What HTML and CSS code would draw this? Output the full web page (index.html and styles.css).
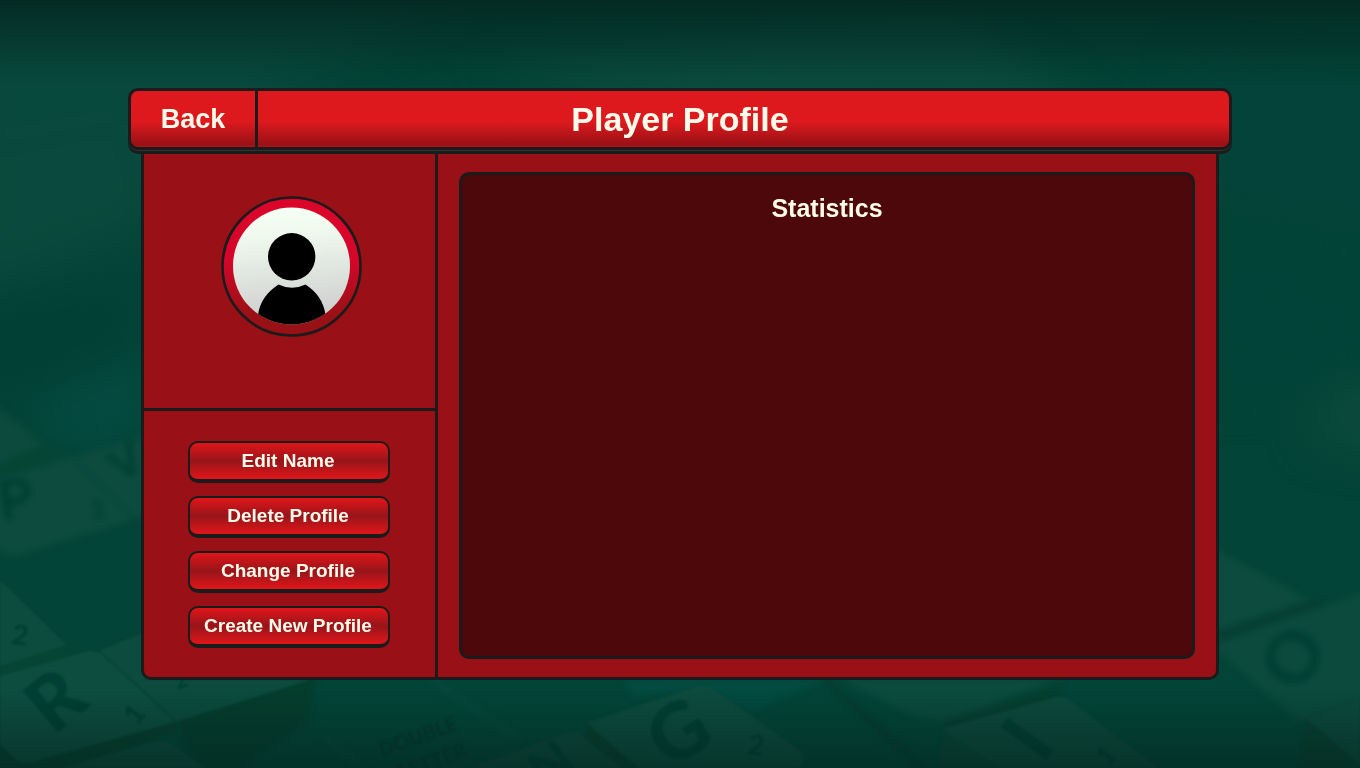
FILE: index.html
```html
<!DOCTYPE html>
<html lang="en">
<head>
<meta charset="utf-8">
<meta name="viewport" content="width=device-width, initial-scale=1">
<title>Player Profile</title>
<link rel="stylesheet" href="styles.css">
</head>
<body>
<svg class="board" viewBox="0 0 1360 768" preserveAspectRatio="xMidYMid slice" aria-hidden="true">
  <defs>
    <linearGradient id="shade" x1="0" y1="0" x2="0" y2="1">
      <stop offset="0" stop-color="#04241d" stop-opacity=".8"/>
      <stop offset=".04" stop-color="#04241d" stop-opacity=".5"/>
      <stop offset=".11" stop-color="#04241d" stop-opacity="0"/>
      <stop offset=".9" stop-color="#04241d" stop-opacity="0"/>
      <stop offset="1" stop-color="#04241d" stop-opacity=".55"/>
    </linearGradient>
    <filter id="far" x="-30%" y="-30%" width="160%" height="160%" color-interpolation-filters="sRGB"><feGaussianBlur stdDeviation="20"/></filter>
    <filter id="mid" x="-10%" y="-10%" width="120%" height="120%" color-interpolation-filters="sRGB"><feGaussianBlur stdDeviation="3"/></filter>
    <filter id="near" x="-10%" y="-10%" width="120%" height="120%" color-interpolation-filters="sRGB"><feGaussianBlur stdDeviation="1"/></filter>
  </defs>
  <rect width="1360" height="768" fill="#034438"/>
  <g filter="url(#far)">
    <path d="M-40 -40H520L260 110 130 240-40 300z" fill="#08493e"/>
    <path d="M480 60 950 10 1110 120 700 130z" fill="#0b4b3e"/>
    <path d="M1180 60 1420 90V220L1230 190z" fill="#04433a"/>
    <path d="M-30 150 120 120 150 220-20 290z" fill="#0a493d"/>
    <path d="M-20 300 130 290V380L-20 400z" fill="#014035"/>
    <path d="M30 400 150 350V440L60 450z" fill="#044a40"/>
    <path d="M1220 220 1390 330V380L1210 400z" fill="#014338"/>
    <path d="M1320 390 1400 370V460L1310 440z" fill="#0b493c"/>
  </g>
  <g filter="url(#mid)">
    <path d="M-10 400 45 445-10 468z" fill="#0b4a3c"/>
    <path d="M-10 468 45 445 70 452-10 480z" fill="#054533"/>
    <path d="M-10 480 150 435V515L15 556-10 548z" fill="#0c4b3e"/>
    <path d="M75 460 135 520" stroke="#05453a" stroke-width="3"/>
    <path d="M1200 540 1310 600 1200 636z" fill="#0c4b3e"/>
    <path d="M1200 636 1310 600 1330 604 1200 648z" fill="#053f32"/>
    <path d="M1210 645 1370 590V700L1300 722z" fill="#0b4a3d"/>
    <path d="M1300 722 1370 697V706L1306 732z" fill="#054131"/>
    <path d="M840 678H1060L945 722 910 715z" fill="#0b4b3d"/>
    <path d="M945 720 1060 685 1065 697 945 738z" fill="#053f30"/>
    <path d="M620 678H830L750 712 700 690 635 697z" fill="#034a40"/>
    <path d="M825 680 930 775" stroke="#063b2f" stroke-width="6"/>
    <path d="M175 722 315 675 310 720 240 768H200z" fill="#053d2d"/>
    <path d="M430 678 520 740M322 735 370 775" stroke="#074a3f" stroke-width="4"/>
    <g class="letter">
      <text x="-2" y="519" font-size="56" transform="rotate(-8 14 500)">P</text>
      <text x="91" y="518" font-size="24" transform="rotate(-10 98 510)">2</text>
      <text x="112" y="476" font-size="44" transform="rotate(-30 130 465)">V</text>
      <text x="1265" y="685" font-size="72" transform="rotate(-62 1292 659)">O</text>
    </g>
  </g>
  <g filter="url(#near)">
    <path d="M0 580 66 644Q68 650 60 653L0 674z" fill="#0c4c3e"/>
    <path d="M0 666 66 645V656L0 678z" fill="#064534"/>
    <path d="M0 676 88 651Q98 650 106 657L175 722 28 763Q20 764 14 758L0 744z" fill="#0d4d3f"/>
    <path d="M100 650 145 632V680H310L175 722 102 654z" fill="#0c4b3e"/>
    <path d="M102 654 175 720" stroke="#07443a" stroke-width="2" fill="none"/>
    <path d="M0 744 16 761 30 764 175 722V732L45 775H0z" fill="#073e2e"/>
    <path d="M60 768 155 742Q164 739 172 744L205 768z" fill="#0d493d"/>
    <path d="M588 722 698 686Q706 684 714 689L802 752Q808 760 798 768H640L590 735z" fill="#0d4b3e"/>
    <path d="M588 724 640 770H612L586 738z" fill="#083e2e"/>
    <path d="M470 768 566 733Q575 730 583 737L622 768z" fill="#0d473b"/>
    <path d="M944 728 1056 697Q1064 695 1071 701L1158 768H938z" fill="#0d493c"/>
    <path d="M944 730 1000 768H938z" fill="#0a4437"/>
    <path d="M1308 718 1360 698V768H1298z" fill="#0c493c"/>
    <path d="M1308 720 1360 764V768H1298z" fill="#083f31"/>
    <g class="letter">
      <text x="32" y="727" font-size="76" transform="rotate(-40 56 702)">R</text>
      <text x="126" y="724" font-size="28" transform="rotate(-52 134 714)">1</text>
      <text x="12" y="645" font-size="28" transform="rotate(10 20 636)">2</text>
      <text x="650" y="760" font-size="78" transform="rotate(-32 678 732)">G</text>
      <text x="748" y="755" font-size="28" transform="rotate(10 756 746)">2</text>
      <text x="532" y="784" font-size="52" transform="rotate(-36 550 766)">N</text>
      <text x="1017" y="766" font-size="78" transform="rotate(-54 1029 740)">I</text>
      <text x="1099" y="764" font-size="26" transform="rotate(-50 1107 756)">1</text>
      <text x="174" y="688" font-size="22" transform="rotate(-20 181 680)">2</text>
    </g>
    <g class="square-label">
      <text x="382" y="757" transform="rotate(-20 382 757)">DOUBLE</text>
      <text x="402" y="780" transform="rotate(-20 402 780)">LETTER</text>
    </g>
  </g>
  <rect width="1360" height="768" fill="url(#shade)"/>
</svg>

<main class="screen">
  <header class="titlebar">
    <button class="back" type="button">Back</button>
    <h1 class="title">Player Profile</h1>
  </header>
  <div class="panel">
    <aside class="sidebar">
      <section class="portrait" aria-label="Player picture">
        <svg class="avatar" viewBox="0 0 141 141" role="img" aria-label="Player avatar">
          <defs>
            <linearGradient id="ring" x1="0" y1="0" x2="0" y2="1">
              <stop offset="0" stop-color="#dc052b"/>
              <stop offset=".45" stop-color="#d4062a"/>
              <stop offset=".85" stop-color="#991116"/>
              <stop offset="1" stop-color="#991116"/>
            </linearGradient>
            <linearGradient id="disc" x1=".45" y1="0" x2=".55" y2="1">
              <stop offset="0" stop-color="#f5fff4"/>
              <stop offset=".25" stop-color="#eef8ed"/>
              <stop offset=".9" stop-color="#d0d0d0"/>
            </linearGradient>
            <clipPath id="disc-clip"><circle cx="70.500" cy="70" r="58.500"/></clipPath>
          </defs>
          <circle cx="70.500" cy="70.500" r="69" fill="url(#ring)" stroke="#1b1b1b" stroke-width="2.600"/>
          <circle cx="70.500" cy="70" r="58.500" fill="url(#disc)"/>
          <g clip-path="url(#disc-clip)">
            <circle cx="70.700" cy="60.800" r="23.700"/>
            <path d="M57.500 88.500Q71 95 84.500 88.500C95 95 103 106 104.500 119V141H37V119C38.500 106 47 95 57.500 88.500z"/>
          </g>
        </svg>
      </section>
      <nav class="actions" aria-label="Profile actions">
        <button class="action" type="button">Edit Name</button>
        <button class="action" type="button">Delete Profile</button>
        <button class="action" type="button">Change Profile</button>
        <button class="action" type="button">Create New Profile</button>
      </nav>
    </aside>
    <div class="content">
      <section class="stats" aria-labelledby="stats-title">
        <h2 class="stats-title" id="stats-title">Statistics</h2>
      </section>
    </div>
  </div>
</main>
</body>
</html>
```
FILE: styles.css
```css
:root {
  --ink: #1b1b1b;
  --cream: #fffbea;
  --red: #991116;
  --bright: #dd191e;
  --wine: #4c080b;
}

* {
  box-sizing: border-box;
}

body {
  margin: 0;
  background: #034438;
  color: var(--cream);
  font-family: "Arial Rounded MT Bold", "Liberation Sans", Arial, sans-serif;
  font-weight: 700;
}

button {
  color: inherit;
  font: inherit;
  cursor: pointer;
}

.board {
  position: fixed;
  inset: 0;
  z-index: -1;
  width: 100%;
  height: 100%;
}

.letter {
  fill: #013f34;
  font-family: Lato, sans-serif;
  font-weight: 900;
}

.square-label {
  fill: #03382d;
  font-family: Lato, sans-serif;
  font-size: 20px;
  font-weight: 700;
}

.screen {
  display: flex;
  flex-direction: column;
  min-height: 100vh;
  padding: 88px 128px;
}

.titlebar {
  display: grid;
  grid-template-columns: 127px 1fr 127px;
  z-index: 1;
  min-height: 62px;
  border: 3px solid var(--ink);
  border-radius: 10px;
  background: linear-gradient(var(--bright) 55%, var(--red) 96%, #b0151a);
  box-shadow: 0 1px #333, 0 4px var(--ink);
}

.back {
  padding: 0;
  border: 0;
  border-right: 3px solid var(--ink);
  background: none;
  font-size: 27px;
}

.title {
  align-self: center;
  margin: 0;
  font-size: 34px;
  line-height: 40px;
  text-align: center;
}

.panel {
  display: flex;
  flex: 1;
  margin: 0 13px;
  border: 3px solid var(--ink);
  border-top: 0;
  border-radius: 0 0 10px 10px;
  background: var(--red);
}

.sidebar {
  display: flex;
  flex: none;
  flex-direction: column;
  border-right: 3px solid var(--ink);
}

.portrait {
  display: flex;
  justify-content: center;
  padding: 46px 0 71px 4px;
  border-bottom: 3px solid var(--ink);
}

.avatar {
  width: 141px;
  height: 141px;
}

.actions {
  display: flex;
  flex-direction: column;
  gap: 13px;
  padding: 30px 45px 28px 44px;
}

.action {
  width: 202px;
  height: 42px;
  padding: 0 2px 0 0;
  border: 2px solid var(--ink);
  border-bottom-width: 4px;
  border-radius: 10px;
  background: linear-gradient(#e0161a, #97151a 50%, #e0161a);
  font-size: 19px;
}

.content {
  display: flex;
  flex: 1;
  padding: 22px 21px 18px;
}

.stats {
  flex: 1;
  padding: 19px 16px;
  border: 3px solid var(--ink);
  border-radius: 10px;
  background: var(--wine);
}

.stats-title {
  margin: 0;
  font-size: 25px;
  line-height: 28px;
  text-align: center;
}
```
